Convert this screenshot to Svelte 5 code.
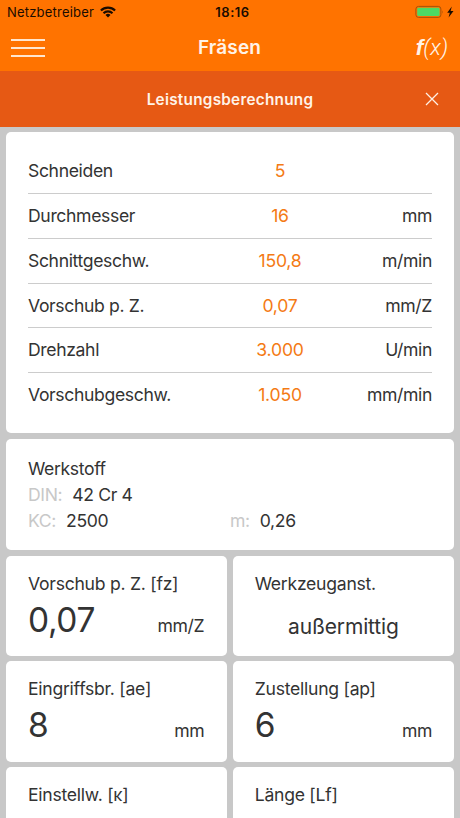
<script lang="ts">
  const results = [
    { label: 'Schneiden', value: '5', unit: '' },
    { label: 'Durchmesser', value: '16', unit: 'mm' },
    { label: 'Schnittgeschw.', value: '150,8', unit: 'm/min' },
    { label: 'Vorschub p. Z.', value: '0,07', unit: 'mm/Z' },
    { label: 'Drehzahl', value: '3.000', unit: 'U/min' },
    { label: 'Vorschubgeschw.', value: '1.050', unit: 'mm/min' }
  ];

  const inputs = [
    { label: 'Vorschub p. Z. [fz]', value: '0,07', unit: 'mm/Z' },
    { label: 'Werkzeuganst.', choice: 'außermittig' },
    { label: 'Eingriffsbr. [ae]', value: '8', unit: 'mm' },
    { label: 'Zustellung [ap]', value: '6', unit: 'mm' },
    { label: 'Einstellw. [κ]' },
    { label: 'Länge [Lf]' }
  ];
</script>

<div class="app">
  <header>
    <div class="status">
      <div class="carrier">
        <span>Netzbetreiber</span>
        <svg width="16" height="12" viewBox="0 0 16 12">
          <g fill="none" stroke="#1a0c00" stroke-width="2.1">
            <path d="M0.9 4.6A10 10 0 0 1 15.1 4.6" />
            <path d="M3.5 7.2A6.4 6.4 0 0 1 12.5 7.2" />
          </g>
          <path d="M8 11.5L5.5 9A3.6 3.6 0 0 1 10.5 9Z" fill="#1a0c00" />
        </svg>
      </div>
      <span class="time">18:16</span>
      <svg class="battery" width="40" height="14" viewBox="0 0 40 14">
        <rect x="0.9" y="1.4" width="25" height="11" rx="2.6" fill="none" stroke="#a85208" />
        <rect x="2.2" y="2.7" width="22.4" height="8.4" rx="1.4" fill="#4cd964" />
        <path d="M27.3 5.2Q28.7 7 27.3 8.8Z" fill="#a85208" />
        <path d="M36.8 1.4L32.2 7.7H34.8L33.6 12.6L38.5 6H35.6Z" fill="#1a0c00" />
      </svg>
    </div>
    <nav>
      <button class="menu" aria-label="Menü">
        <span></span>
        <span></span>
        <span></span>
      </button>
      <h1>Fräsen</h1>
      <div class="formula"><b>f</b><span>(x)</span></div>
    </nav>
  </header>

  <div class="subheader">
    <h2>Leistungsberechnung</h2>
    <svg class="close" width="14" height="14" viewBox="0 0 14 14">
      <path d="M1 1L13 13M13 1L1 13" stroke="#fff0e4" stroke-width="1.3" fill="none" />
    </svg>
  </div>

  <main>
    <section class="card results">
      {#each results as row}
        <div class="row">
          <span>{row.label}</span>
          <span class="result">{row.value}</span>
          <span class="unit">{row.unit}</span>
        </div>
      {/each}
    </section>

    <section class="card material">
      <div>Werkstoff</div>
      <div class="prop"><i>DIN:</i><span>42 Cr 4</span></div>
      <div class="pair">
        <div class="prop"><i>KC:</i><span>2500</span></div>
        <div class="prop"><i>m:</i><span>0,26</span></div>
      </div>
    </section>

    <div class="grid">
      {#each inputs as item}
        <section class="card input">
          <div class="label">{item.label}</div>
          {#if item.choice}
            <div class="choice">{item.choice}</div>
          {:else if item.value}
            <div class="entry">
              <span class="number">{item.value}</span>
              <span>{item.unit}</span>
            </div>
          {/if}
        </section>
      {/each}
    </div>
  </main>
</div>

<style>
  :global(body) {
    overflow: hidden;
  }

  .app {
    height: 818px;
    overflow: hidden;
    display: flex;
    flex-direction: column;
    background: #c8c8c8;
    color: #333;
    font-family: Inter, 'Liberation Sans', sans-serif;
    font-size: 17.6px;
  }

  header {
    flex: none;
    height: 71px;
    background: #ff7300;
  }

  .status {
    display: grid;
    grid-template-columns: 1fr auto 1fr;
    align-items: center;
    height: 24px;
    padding: 0 5px 0 7px;
    color: #1a0c00;
    font-size: 13px;
  }

  .carrier {
    display: flex;
    align-items: center;
    gap: 6px;
    letter-spacing: 0.2px;
  }

  .time {
    font-weight: 600;
    letter-spacing: 0.5px;
    margin-left: 3px;
  }

  .battery {
    justify-self: end;
  }

  nav {
    display: grid;
    grid-template-columns: 1fr auto 1fr;
    align-items: center;
    height: 47px;
    padding: 0 12px 0 11px;
    color: #fff3e8;
  }

  .menu {
    display: flex;
    flex-direction: column;
    gap: 6px;
    width: 34px;
    padding: 0;
    border: none;
    background: none;
  }

  .menu span {
    height: 2px;
    background: #ffe6cf;
  }

  h1,
  h2 {
    margin: 0;
    font-weight: 600;
  }

  h1 {
    font-size: 19px;
    letter-spacing: 0.15px;
  }

  .formula {
    justify-self: end;
    font-family: Roboto, sans-serif;
    font-size: 22.5px;
    font-style: italic;
    line-height: 26px;
  }

  .formula b {
    font-family: 'Liberation Sans', sans-serif;
  }

  .formula span {
    font-weight: 300;
  }

  .subheader {
    flex: none;
    display: grid;
    grid-template-columns: 1fr auto 1fr;
    align-items: center;
    box-sizing: border-box;
    height: 56px;
    padding: 0 21px;
    background: #e65914;
    color: #fff3e8;
  }

  h2 {
    grid-column: 2;
    font-size: 15.3px;
    letter-spacing: 0.27px;
  }

  .close {
    justify-self: end;
  }

  main {
    display: flex;
    flex-direction: column;
    gap: 5.6px;
    padding: 5.4px 6px 0;
    letter-spacing: -0.36px;
  }

  .card {
    flex: none;
    box-sizing: border-box;
    padding: 0 22px;
    border-radius: 5px;
    background: #fff;
  }

  .results {
    height: 301px;
    padding-top: 16.8px;
  }

  .row {
    display: grid;
    grid-template-columns: 202px 100px 1fr;
    align-items: center;
    box-sizing: border-box;
    height: 44.8px;
    padding-bottom: 0.6px;
    border-bottom: 1px solid #ccc;
  }

  .row:last-child {
    border-bottom-color: transparent;
  }

  .result {
    color: #f47a14;
    letter-spacing: -0.2px;
    text-align: center;
  }

  .unit {
    text-align: right;
  }

  .material {
    height: 111px;
    padding-top: 16.8px;
    line-height: 26.1px;
  }

  .pair {
    display: grid;
    grid-template-columns: 1fr 1fr;
  }

  .prop {
    display: flex;
    gap: 10px;
  }

  .prop i {
    color: #c8c8c8;
    font-style: normal;
  }

  .grid {
    display: grid;
    grid-template-columns: 1fr 1fr;
    gap: 5.4px;
  }

  .input {
    height: 100.4px;
    padding: 16px 23px 0 22px;
  }

  .input:nth-child(even) {
    padding-right: 22px;
  }

  .label {
    line-height: 24px;
    letter-spacing: -0.26px;
  }

  .entry {
    display: flex;
    align-items: baseline;
    justify-content: space-between;
    margin-top: 3px;
    line-height: 42px;
  }

  .number {
    font-size: 33.5px;
  }

  .choice {
    margin-top: 18px;
    font-size: 21px;
    line-height: 26px;
    letter-spacing: -0.15px;
    text-align: center;
  }
</style>
